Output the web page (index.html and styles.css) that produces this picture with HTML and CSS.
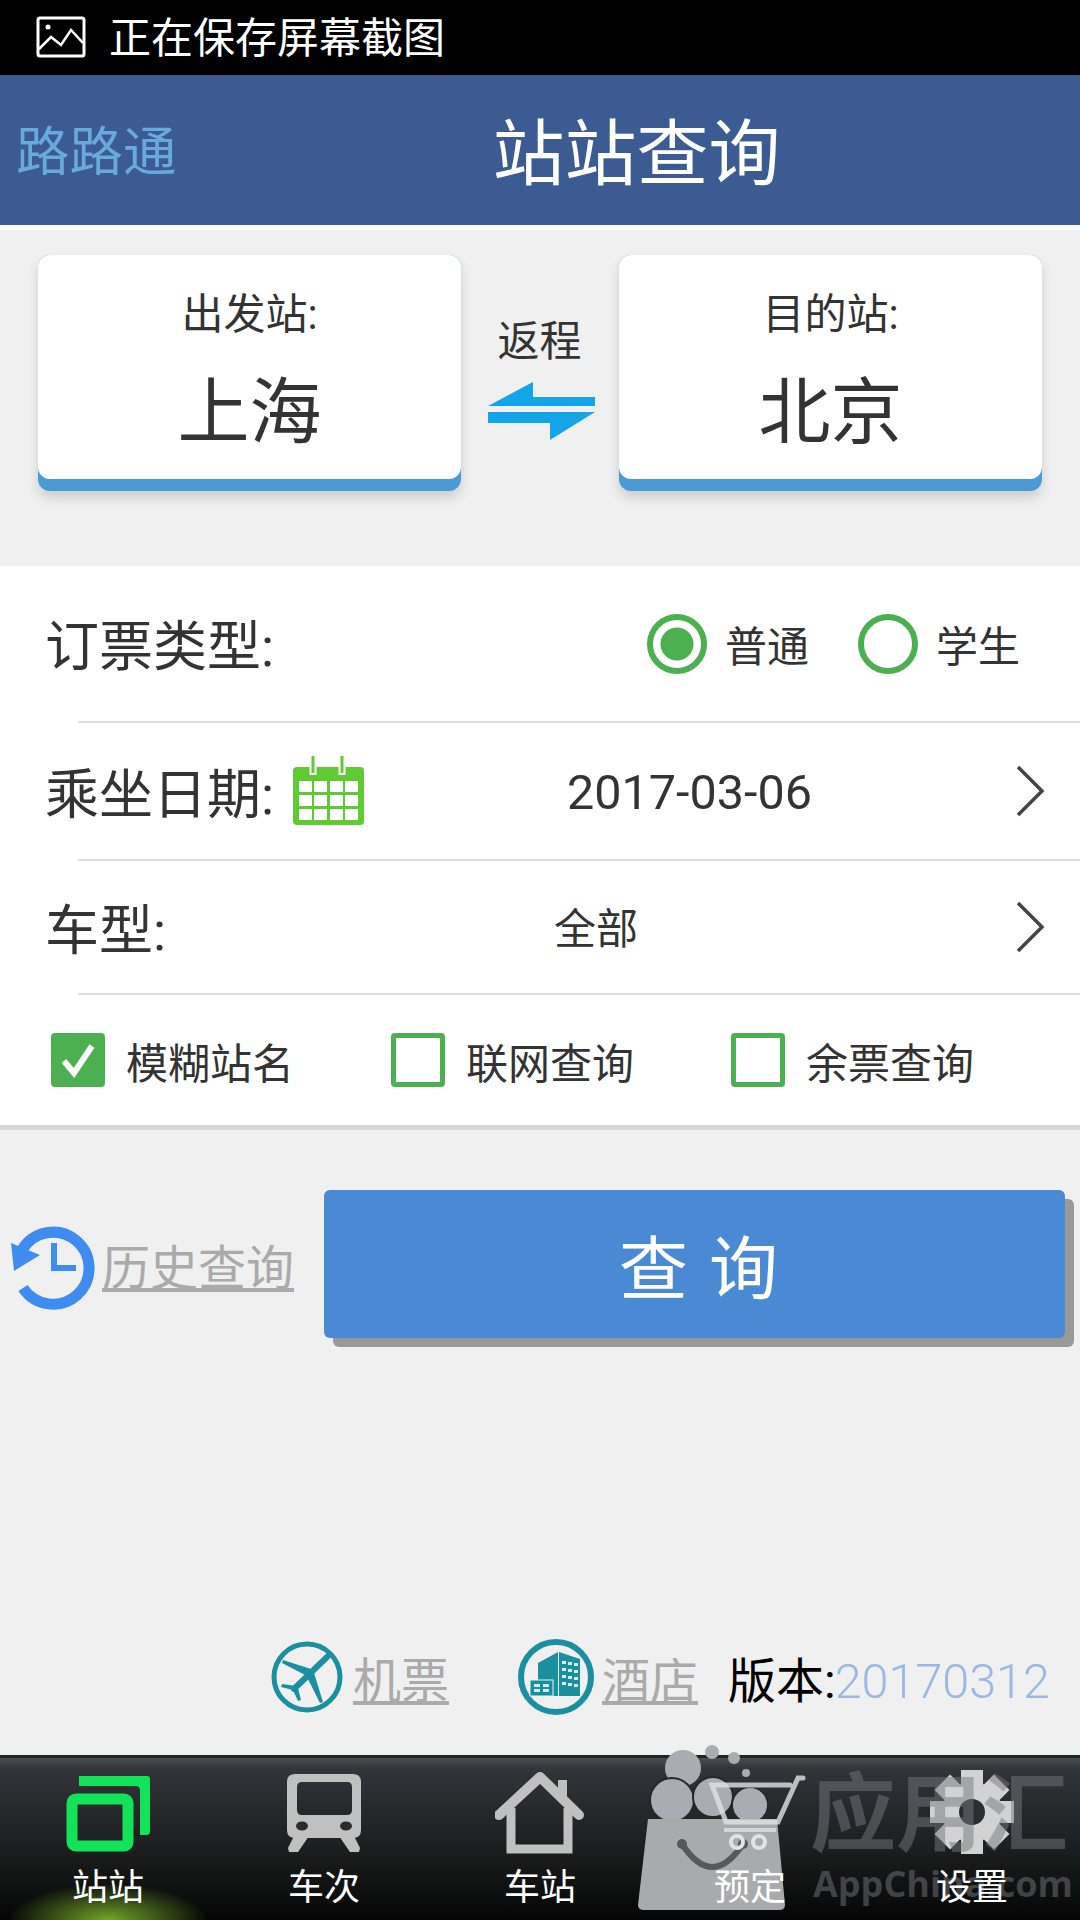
FILE: index.html
```html
<!DOCTYPE html>
<html lang="zh-CN">
 <head>
  <meta charset="utf-8" />
  <title>站站查询</title>
  <link rel="stylesheet" href="styles.css">
 </head>
 <body>
  <div id="page">
   <div class="status">
    <svg class="status-icon" width="50" height="42" viewBox="0 0 50 42">
     <rect x="2" y="2" width="46" height="38" rx="2" fill="none" stroke="#fff" stroke-width="3" />
     <circle cx="12" cy="11" r="2.5" fill="#fff" />
     <path d="M3 33 L15 21 L25 29 L35 14 L47 27" fill="none" stroke="#fff" stroke-width="2.5" />
    </svg>
    <span class="status-text">正在保存屏幕截图</span>
   </div>
   <div class="header">
    <span class="logo">路路通</span>
    <span class="title">站站查询</span>
   </div>

   <div class="route">
    <div class="card">
     <div class="card-in">
      <div class="card-label">出发站:</div>
      <div class="card-city">上海</div>
     </div>
    </div>
    <div class="swap">
     <div class="swap-label">返程</div>
     <svg width="110" height="60" viewBox="0 0 110 60">
      <polygon points="46,0 1,24 108,24 108,15 46,15" fill="#14a5e8" />
      <polygon points="1,30 108,30 63,58 63,41 1,41" fill="#14a5e8" />
     </svg>
    </div>
    <div class="card">
     <div class="card-in">
      <div class="card-label">目的站:</div>
      <div class="card-city">北京</div>
     </div>
    </div>
   </div>

   <div class="form">
    <div class="row row-type">
     <span class="row-label">订票类型:</span>
     <div class="radios">
      <span class="radio on"></span><span class="radio-text">普通</span>
      <span class="radio"></span><span class="radio-text">学生</span>
     </div>
    </div>
    <div class="line"></div>
    <div class="row row-date">
     <span class="row-label">乘坐日期:</span>
     <svg class="cal" width="71" height="70" viewBox="0 0 71 70">
      <rect x="0" y="12" width="71" height="58" rx="4" fill="#5ecb32" />
      <path d="M20 8 V20 M49 8 V20" stroke="#fff" stroke-width="7" />
      <path d="M20 1 V18 M49 1 V18" stroke="#5ecb32" stroke-width="3" />
      <g fill="#fff">
       <rect x="6" y="26" width="13" height="11" /><rect x="21" y="26" width="13" height="11" /><rect x="37" y="26" width="13" height="11" /><rect x="52" y="26" width="13" height="11" />
       <rect x="6" y="40" width="13" height="11" /><rect x="21" y="40" width="13" height="11" /><rect x="37" y="40" width="13" height="11" /><rect x="52" y="40" width="13" height="11" />
       <rect x="6" y="54" width="13" height="11" /><rect x="21" y="54" width="13" height="11" /><rect x="37" y="54" width="13" height="11" /><rect x="52" y="54" width="13" height="11" />
      </g>
     </svg>
     <span class="date">2017-03-06</span>
     <svg class="chev" width="30" height="52" viewBox="0 0 30 52">
      <polyline points="3,2 27,26 3,50" fill="none" stroke="#444" stroke-width="3.5" />
     </svg>
    </div>
    <div class="line"></div>
    <div class="row row-train">
     <span class="row-label">车型:</span>
     <span class="train-type">全部</span>
     <svg class="chev" width="30" height="52" viewBox="0 0 30 52">
      <polyline points="3,2 27,26 3,50" fill="none" stroke="#444" stroke-width="3.5" />
     </svg>
    </div>
    <div class="line"></div>
    <div class="checks">
     <div class="check">
      <span class="box on">
       <svg width="54" height="54" viewBox="0 0 54 54"><polyline points="13,28 23,40 41,13" fill="none" stroke="#fff" stroke-width="6" /></svg>
      </span>
      <span>模糊站名</span>
     </div>
     <div class="check"><span class="box"></span><span>联网查询</span></div>
     <div class="check"><span class="box"></span><span>余票查询</span></div>
    </div>
   </div>

   <div class="main">
    <div class="actions">
     <a class="history">
      <svg class="history-icon" width="90" height="86" viewBox="0 0 90 86">
       <path d="M13 25 A36 36 0 1 1 14 63" fill="none" stroke="#3f8cf0" stroke-width="11" />
       <polygon points="2,18 5,46 31,30" fill="#3f8cf0" />
       <polyline points="45,18 45,43 67,43" fill="none" stroke="#3f8cf0" stroke-width="6" />
      </svg>
      <span class="link">历史查询</span>
     </a>
     <button class="query" type="button">查 询</button>
    </div>
    <div class="extras">
     <svg width="74" height="74" viewBox="0 0 74 74">
      <circle cx="37" cy="37" r="33" fill="none" stroke="#1a8fa0" stroke-width="5" />
      <path d="M57 17 L24 49" stroke="#1a8fa0" stroke-width="6" stroke-linecap="round" />
      <polygon points="41,29 13,20 12,23 35,35" fill="#1a8fa0" />
      <polygon points="44,33 53,62 50,63 38,39" fill="#1a8fa0" />
      <polygon points="26,46 12,44 11,47 23,50 28,61 31,60 28,48" fill="#1a8fa0" />
     </svg>
     <span class="link link-air">机票</span>
     <svg class="hotel" width="78" height="78" viewBox="0 0 78 78">
      <circle cx="39" cy="39" r="35" fill="none" stroke="#1a8fa0" stroke-width="6" />
      <polygon points="21,25 41,14 41,58 21,58" fill="#1a8fa0" />
      <polygon points="42,14 63,21 63,58 42,58" fill="#1a8fa0" />
      <rect x="13" y="42" width="23" height="16" fill="#1a8fa0" stroke="#f0f0f0" stroke-width="1" />
      <g fill="#d8eef0">
       <rect x="45" y="23" width="4" height="3" /><rect x="51" y="24" width="4" height="3" /><rect x="57" y="25" width="4" height="3" />
       <rect x="45" y="30" width="4" height="3" /><rect x="51" y="31" width="4" height="3" /><rect x="57" y="32" width="4" height="3" />
       <rect x="45" y="37" width="4" height="3" /><rect x="51" y="38" width="4" height="3" /><rect x="57" y="39" width="4" height="3" />
       <rect x="45" y="44" width="4" height="3" /><rect x="51" y="45" width="4" height="3" /><rect x="57" y="46" width="4" height="3" />
       <rect x="17" y="46" width="6" height="3" /><rect x="26" y="46" width="6" height="3" />
       <rect x="17" y="51" width="6" height="3" /><rect x="26" y="51" width="6" height="3" />
      </g>
     </svg>
     <span class="link link-hotel">酒店</span>
     <span class="version">版本:<span class="version-num">20170312</span></span>
    </div>
   </div>

   <div class="nav">
    <div class="nav-item active">
     <svg width="86" height="78" viewBox="0 0 86 78">
      <path d="M14 0 H82 Q85 0 85 3 V56 Q85 59 81 59 H75 V14 Q75 10 70 10 H14 Z" fill="#12e45a" />
      <rect x="7" y="23" width="56" height="47" rx="4" fill="none" stroke="#12e45a" stroke-width="11" />
     </svg>
     <span class="nav-label">站站</span>
    </div>
    <div class="nav-item">
     <svg width="74" height="80" viewBox="0 0 74 80">
      <path fill-rule="evenodd" d="M8 0 H66 Q74 0 74 8 V56 Q74 64 66 64 H8 Q0 64 0 56 V8 Q0 0 8 0 Z M15 8 Q10 8 10 13 V36 Q10 41 15 41 H60 Q65 41 65 36 V13 Q65 8 60 8 Z" fill="#c0c0c0" />
      <ellipse cx="15" cy="52" rx="6" ry="4.5" fill="#2a2c2c" />
      <ellipse cx="59" cy="52" rx="6" ry="4.5" fill="#2a2c2c" />
      <polygon points="7,62 22,62 11,78 2,78 1,74" fill="#c0c0c0" />
      <polygon points="52,62 67,62 73,74 72,78 63,78" fill="#c0c0c0" />
     </svg>
     <span class="nav-label">车次</span>
    </div>
    <div class="nav-item">
     <svg width="90" height="82" viewBox="0 0 90 82">
      <path d="M4 43 L45 5 L84 43" fill="none" stroke="#c0c0c0" stroke-width="10" stroke-linejoin="round" stroke-linecap="round" />
      <path d="M16 36 V77 H73 V36" fill="none" stroke="#c0c0c0" stroke-width="9" />
      <rect x="63" y="8" width="9" height="20" fill="#c0c0c0" />
     </svg>
     <span class="nav-label">车站</span>
    </div>
    <div class="nav-item nav-item-cart">
     <svg class="nav-cart" width="100" height="82" viewBox="0 0 100 82">
      <path d="M97 6 H92 L72 50 H20 L6 13 H84" fill="none" stroke="#e2e2e2" stroke-width="5" stroke-linecap="round" opacity=".8" />
      <path d="M18 58 H70" stroke="#e2e2e2" stroke-width="4" opacity=".8" />
      <circle cx="31" cy="70" r="6" fill="none" stroke="#e2e2e2" stroke-width="4" />
      <circle cx="53" cy="70" r="6" fill="none" stroke="#e2e2e2" stroke-width="4" />
     </svg>
     <span class="nav-label">预定</span>
    </div>
    <div class="nav-item">
     <svg width="86" height="84" viewBox="0 0 86 84">
      <g fill="#d2d2d2">
       <rect x="32" y="0" width="22" height="84" />
       <rect x="1" y="31" width="84" height="22" />
       <rect x="32" y="0" width="22" height="84" transform="rotate(45 43 42)" />
       <rect x="32" y="0" width="22" height="84" transform="rotate(-45 43 42)" />
       <circle cx="43" cy="42" r="30" />
      </g>
      <circle cx="43" cy="42" r="13" fill="#2b2d2e" />
     </svg>
     <span class="nav-label">设置</span>
    </div>
   </div>

   <div class="watermark">
    <svg class="bag" width="150" height="170" viewBox="0 0 150 170">
     <g fill="#a9acb2">
      <circle cx="45" cy="23" r="18" />
      <circle cx="74" cy="7" r="7" />
      <circle cx="96" cy="13" r="6" />
      <circle cx="108" cy="28" r="4" />
     </g>
     <g fill="#a9acb2" stroke="#25282b" stroke-width="2">
      <circle cx="34" cy="55" r="22" />
      <circle cx="75" cy="52" r="20" />
      <circle cx="112" cy="60" r="18" />
     </g>
     <path d="M10 74 H139 L147 160 Q147 165 141 165 H6 Q0 165 0 160 Z" fill="#a8aaac" />
     <path d="M44 99 Q74 145 105 99" fill="none" stroke="#55585c" stroke-width="6" />
     <circle cx="44" cy="99" r="5" fill="#55585c" />
     <circle cx="105" cy="99" r="5" fill="#55585c" />
    </svg>
    <div class="mark-text">
     <div class="mark-cn">应用汇</div>
     <div class="mark-en">AppChina.com</div>
    </div>
   </div>
  </div>
 </body>
</html>
```

FILE: styles.css
```css
* { margin: 0; padding: 0; box-sizing: border-box; }
body {
  font-family: Roboto, "Noto Sans CJK SC", sans-serif;
  color: #333;
}
svg { display: block; flex: none; }

#page {
  position: relative;
  width: 1080px;
  height: 1920px;
  display: flex;
  flex-direction: column;
  overflow: hidden;
  background-color: #f0f0f0;
}

.status {
  height: 75px;
  display: flex;
  align-items: center;
  padding: 0 0 2px 36px;
  gap: 23px;
  color: #fff;
  font-size: 42px;
  line-height: 50px;
  background-color: #000;
}
.status-text { margin-top: 5px; }

.header {
  height: 155px;
  padding: 0 0 5px 16px;
  display: flex;
  align-items: center;
  background-color: #3b5b92;
  border-bottom: 5px solid #fafafa;
}
.logo { font-size: 53.5px; color: #6aa9dc; }
.title { margin-left: 316px; font-size: 72px; color: #fff; }

.route {
  height: 336px;
  padding: 25px 38px 0;
  display: flex;
  align-items: flex-start;
}
.card {
  width: 423px;
  height: 236px;
  border-radius: 12px;
  background-color: #4a9ad4;
  box-shadow: 0 7px 12px rgba(0,0,0,.14);
}
.card + .swap + .card { margin-left: 1px; width: 423px; }
.card-in {
  height: 224px;
  border-radius: 12px;
  background-color: #fff;
  display: flex;
  flex-direction: column;
  align-items: center;
  padding-top: 30px;
}
.card-label { font-size: 42px; line-height: 60px; }
.card-city { margin-top: 20px; font-size: 72px; line-height: 96px; }

.swap {
  width: 157px;
  display: flex;
  flex-direction: column;
  align-items: center;
  padding-top: 57px;
}
.swap-label { font-size: 42px; line-height: 60px; }
.swap svg { margin: 10px 0 0 4px; }

.form {
  height: 564px;
  background-color: #fff;
  border-bottom: 5px solid #d8d8d8;
}
.row {
  display: flex;
  align-items: center;
  padding-left: 45px;
}
.row-type { height: 155px; }
.row-date { height: 136px; }
.row-train { height: 132px; }
.row-label { font-size: 54px; margin-top: -2px; }
.line {
  height: 2px;
  margin-left: 78px;
  background-color: #ddd;
}

.radios {
  margin-left: auto;
  margin-right: 60px;
  display: flex;
  align-items: center;
  font-size: 42px;
}
.radio {
  width: 60px;
  height: 60px;
  border: 6px solid #4caf50;
  border-radius: 50%;
  background-color: #fff;
}
.radio.on { background: radial-gradient(circle, #4caf50 0 16px, #fff 17px); }
.radio-text { margin-left: 18px; margin-right: 49px; }
.radio-text:last-child { margin-right: 0; }

.cal { margin-left: 19px; margin-top: -2px; }
.date { margin-left: 203px; margin-top: 2px; font-size: 48.5px; }
.train-type { margin-left: 388px; font-size: 42px; margin-top: -3px; }
.chev { margin-left: auto; margin-right: 35px; }

.checks {
  height: 130px;
  padding-left: 51px;
  display: grid;
  grid-template-columns: repeat(3, 340px);
  align-items: center;
  font-size: 42px;
}
.check { display: flex; align-items: center; gap: 21px; }
.box {
  width: 54px;
  height: 54px;
  border: 5px solid #4caf50;
  border-radius: 4px;
}
.box svg { margin: -5px; }
.box.on { background-color: #4caf50; }

.main {
  flex: 1;
  display: flex;
  flex-direction: column;
}
.actions {
  margin-top: 60px;
  padding-left: 8px;
  display: flex;
  align-items: center;
}
.history { display: flex; align-items: center; gap: 3px; width: 316px; }
.history-icon { margin: 8px 0 0 1px; }
.link { font-size: 48px; color: #aaa; text-decoration: underline; }
.query {
  width: 741px;
  height: 148px;
  padding-left: 8px;
  border: 0;
  border-radius: 6px;
  font-family: inherit;
  font-size: 69px;
  word-spacing: 4px;
  color: #fff;
  background-color: #4a8ad4;
  box-shadow: 9px 9px 0 #999;
}

.extras {
  margin-top: auto;
  margin-bottom: 39px;
  padding-left: 270px;
  display: flex;
  align-items: center;
}
.link-air { margin-left: 9px; }
.hotel { margin-left: 68px; }
.link-hotel { margin-left: 7px; }
.version { margin-left: 30px; font-size: 48px; color: #000; }
.version-num { margin-left: -1px; font-size: 48.5px; color: #9ab8e0; font-weight: 300; }

.nav {
  height: 165px;
  display: flex;
  border-top: 3px solid #222;
  background:
    radial-gradient(ellipse 100px 36px at 108px 100%, rgba(135,195,45,.85), rgba(135,195,45,0)),
    linear-gradient(#4a4f50 0, #33373b 10px, #2e3237 20px, #1b1d1d 95px, #050505 162px);
}
.nav-item {
  width: 216px;
  height: 162px;
  position: relative;
  display: flex;
  flex-direction: column;
  align-items: center;
  justify-content: flex-end;
  padding-bottom: 7px;
}
.nav-item svg { margin-bottom: 9px; }
.nav-label { position: relative; z-index: 2; font-size: 36px; line-height: 50px; color: #fff; }
.nav-item-cart .nav-label { margin-right: 12px; }
.nav-cart { position: relative; z-index: 2; }

/* store watermark stamped over the tab bar */
.watermark {
  position: absolute;
  left: 638px;
  top: 1745px;
  z-index: 1;
  display: flex;
}
.mark-text { margin-left: 22px; padding-top: 25px; }
.mark-cn {
  font-size: 86px;
  line-height: 92px;
  font-weight: 700;
  color: rgba(115,120,125,.5);
}
.mark-en {
  margin-left: 3px;
  font-family: "Open Sans", sans-serif;
  font-size: 36px;
  line-height: 44px;
  font-weight: 700;
  color: rgba(115,120,125,.5);
}
```
